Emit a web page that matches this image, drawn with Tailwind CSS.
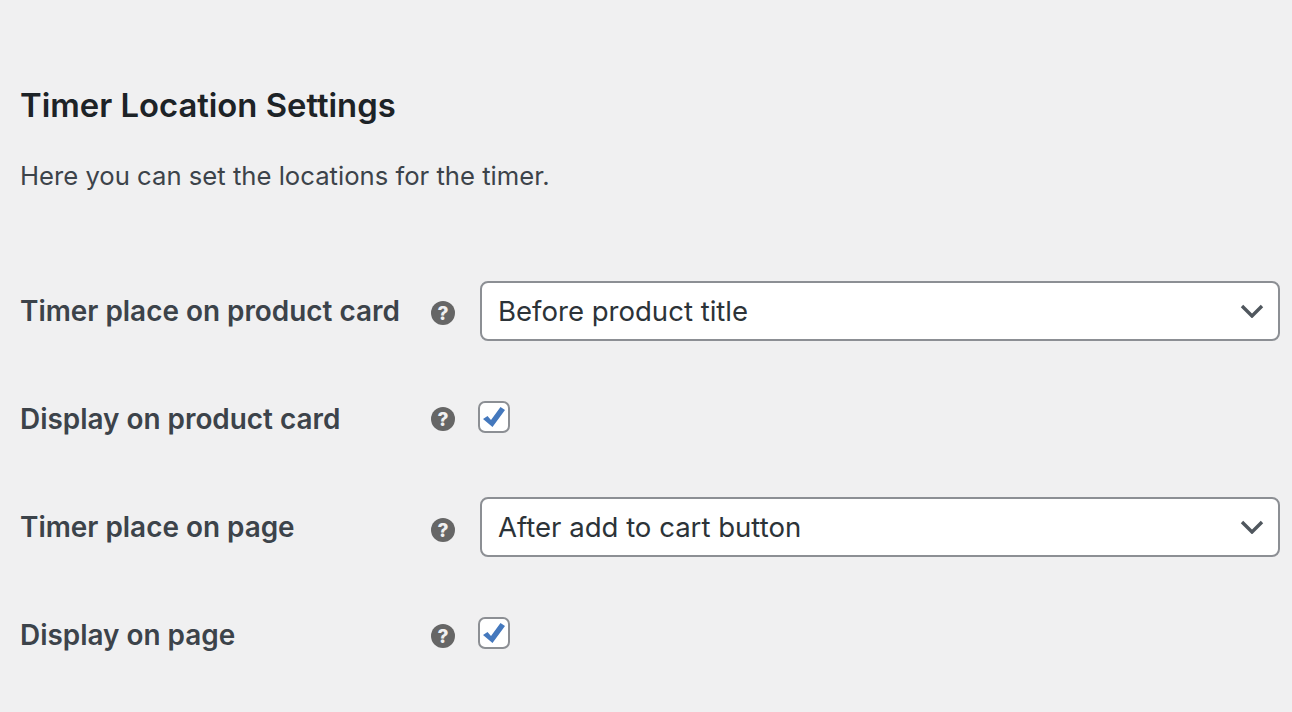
<!DOCTYPE html>
<html><head><meta charset="utf-8"><script src="https://cdn.jsdelivr.net/npm/@tailwindcss/browser@4"></script></head>
<body class="bg-[#f0f0f1] font-['Inter','Liberation_Sans',sans-serif] overflow-hidden">
<main class="w-[1292px] h-[712px] pl-5 pr-3 pt-[85px]">
<h2 class="text-[32.8px] leading-10 font-semibold text-[#1d2327]">Timer Location Settings</h2>
<p class="mt-[31px] text-[25.66px] leading-10 text-[#3c434a]">Here you can set the locations for the timer.</p>
<div class="mt-[61px] flex flex-col text-[#3c434a]">
<div class="h-[108px] flex items-center">
<span class="w-[411px] text-[27.9px] font-semibold mt-[1px]">Timer place on product card</span>
<svg class="w-6 h-6 mr-[25px] mt-[3px]" viewBox="0 0 24 24"><circle cx="12" cy="12" r="12" fill="#666"/><text x="12" y="18.5" text-anchor="middle" font-size="19" font-weight="800" fill="#f0f0f1">?</text></svg>
<div class="w-[800px] h-[60px] rounded-[8px] border-2 border-[#8c8f94] bg-white flex items-center justify-between pl-[16px] pr-[14px] text-[27.55px] text-[#2c3338]"><span class="mt-[1px]">Before product title</span><svg class="w-[24px] h-[14px]" viewBox="0 0 24 14" fill="none" stroke="#50575e" stroke-width="3.4"><path d="M2 2l10 10L22 2"/></svg></div>
</div>
<div class="h-[108px] flex items-center">
<span class="w-[411px] text-[27.9px] font-semibold mt-[1px]">Display on product card</span>
<svg class="w-6 h-6 mr-[23px]" viewBox="0 0 24 24"><circle cx="12" cy="12" r="12" fill="#666"/><text x="12" y="18.5" text-anchor="middle" font-size="19" font-weight="800" fill="#f0f0f1">?</text></svg>
<div class="w-8 h-8 -mt-1 rounded-[7px] border-2 border-[#8c8f94] bg-white flex items-center justify-center"><svg class="w-[22px] h-[20px]" viewBox="0 0 22 20" fill="#4478bd"><path d="M0 12l4.5-3 3.5 4L17.5 0 22 3 9.5 20z"/></svg></div>
</div>
<div class="h-[108px] flex items-center">
<span class="w-[411px] text-[27.9px] font-semibold mt-[1px]">Timer place on page</span>
<svg class="w-6 h-6 mr-[25px] mt-[5px]" viewBox="0 0 24 24"><circle cx="12" cy="12" r="12" fill="#666"/><text x="12" y="18.5" text-anchor="middle" font-size="19" font-weight="800" fill="#f0f0f1">?</text></svg>
<div class="w-[800px] h-[60px] rounded-[8px] border-2 border-[#8c8f94] bg-white flex items-center justify-between pl-[16px] pr-[14px] text-[27.55px] text-[#2c3338]"><span class="mt-[1px]">After add to cart button</span><svg class="w-[24px] h-[14px]" viewBox="0 0 24 14" fill="none" stroke="#50575e" stroke-width="3.4"><path d="M2 2l10 10L22 2"/></svg></div>
</div>
<div class="h-[108px] flex items-center">
<span class="w-[411px] text-[27.9px] font-semibold mt-[1px]">Display on page</span>
<svg class="w-6 h-6 mr-[23px] mt-[1px]" viewBox="0 0 24 24"><circle cx="12" cy="12" r="12" fill="#666"/><text x="12" y="18.5" text-anchor="middle" font-size="19" font-weight="800" fill="#f0f0f1">?</text></svg>
<div class="w-8 h-8 -mt-1 rounded-[7px] border-2 border-[#8c8f94] bg-white flex items-center justify-center"><svg class="w-[22px] h-[20px]" viewBox="0 0 22 20" fill="#4478bd"><path d="M0 12l4.5-3 3.5 4L17.5 0 22 3 9.5 20z"/></svg></div>
</div>
</div>
</main>
</body></html>
